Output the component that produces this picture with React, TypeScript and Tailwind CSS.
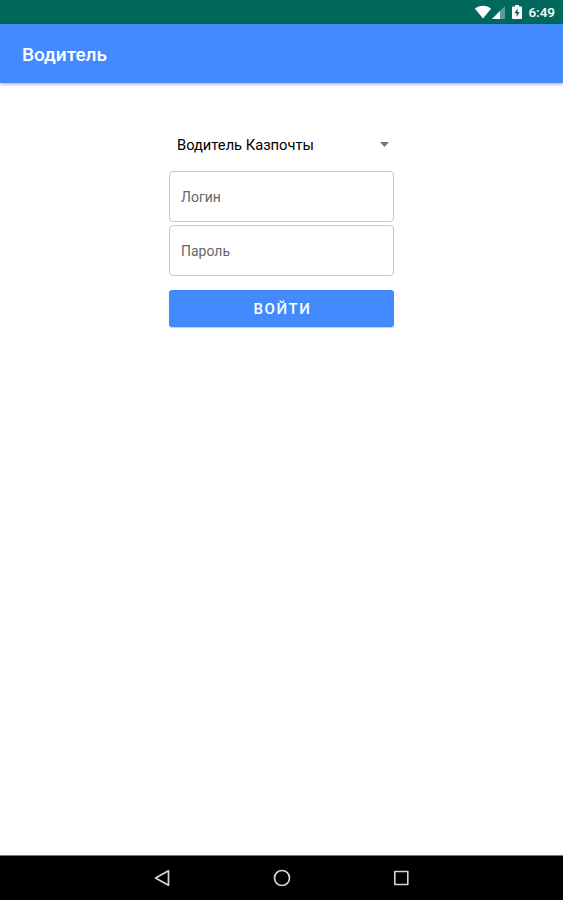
import React, { useState } from 'react';

const StatusBar: React.FC = () => (
  <div className="h-[24px] flex-shrink-0 bg-[#00695c] flex items-center justify-end pr-2 text-white">
    {/* Wifi */}
    <svg width="18" height="14" viewBox="0 0 18 14" fill="currentColor">
      <path d="M9 13.5 L0.8 3.6 C5.4 -0.3 12.6 -0.3 17.2 3.6 Z" />
    </svg>
    {/* Cell signal */}
    <svg width="13" height="13" viewBox="0 0 13 13" fill="currentColor">
      <path d="M0 13 L13 0 V13 Z" opacity="0.35" />
      <path d="M0 13 L8 5 V13 Z" />
    </svg>
    {/* Battery */}
    <svg width="10" height="14" viewBox="0 0 10 14" className="ml-[7px]">
      <path d="M3 0 H7 V1.4 H9 Q10 1.4 10 2.4 V13 Q10 14 9 14 H1 Q0 14 0 13 V2.4 Q0 1.4 1 1.4 H3 Z" fill="currentColor" />
      <path d="M5.6 3.4 L2.4 8.2 H4.5 V12 L7.6 7 H5.6 Z" fill="#00695c" />
    </svg>
    <span className="ml-[6px] pt-[2px] text-[13.5px] leading-none font-medium">6:49</span>
  </div>
);

interface FieldProps {
  label: string;
  type: string;
  value: string;
  onChange: (value: string) => void;
}

const Field: React.FC<FieldProps> = ({ label, type, value, onChange }) => (
  <label className="h-[51px] w-full flex items-center rounded-[4px] border border-[#c8c8c8] px-[11px] pt-[2px] text-[14px] text-[#666666]">
    {!value && <span className="flex-shrink-0">{label}</span>}
    <input
      type={type}
      value={value}
      onChange={(e) => onChange(e.target.value)}
      className="min-w-0 flex-grow bg-transparent text-black focus:outline-none"
    />
  </label>
);

const NavigationBar: React.FC = () => (
  <div className="h-[45px] flex-shrink-0 bg-black border-t border-[#777777] flex items-center justify-center gap-[102px] text-[#d6d6d6]">
    <svg width="18" height="18" viewBox="0 0 18 18" fill="none" stroke="currentColor" strokeWidth="1.7" strokeLinejoin="round">
      <path d="M15.5 1.8 V16.2 L2.5 9 Z" />
    </svg>
    <svg width="18" height="18" viewBox="0 0 18 18" fill="none" stroke="currentColor" strokeWidth="1.7">
      <circle cx="9" cy="9" r="7.5" />
    </svg>
    <svg width="18" height="18" viewBox="0 0 18 18" fill="none" stroke="currentColor" strokeWidth="1.6" strokeLinejoin="round">
      <rect x="1.8" y="2.5" width="13" height="13" />
    </svg>
  </div>
);

const App: React.FC = () => {
  const [login, setLogin] = useState('');
  const [password, setPassword] = useState('');

  return (
    <div className="h-screen flex flex-col bg-white font-['Roboto','Noto_Sans',sans-serif]">
      <StatusBar />

      <header className="h-[59px] flex-shrink-0 bg-[#448aff] pl-[22px] pt-[4px] flex items-center shadow-[0_1px_3px_rgba(0,0,0,0.35)]">
        <h1 className="text-[19px] font-medium text-white">Водитель</h1>
      </header>

      <main className="flex-grow w-[225px] mx-auto pt-[47px] flex flex-col">
        <button className="h-[28px] flex items-center justify-between pl-2 pr-[5px] text-[14.7px] text-black">
          <span className="pt-[2px]">Водитель Казпочты</span>
          <svg width="9" height="5" viewBox="0 0 9 5" fill="#757575">
            <path d="M0 0 H9 L4.5 5 Z" />
          </svg>
        </button>

        <form className="mt-[13px] flex flex-col" onSubmit={(e) => e.preventDefault()}>
          <Field label="Логин" type="text" value={login} onChange={setLogin} />
          <div className="h-[3px]" />
          <Field label="Пароль" type="password" value={password} onChange={setPassword} />
          <button
            type="submit"
            className="mt-[14px] h-[37px] rounded-[3px] bg-[#448aff] pl-[2px] pt-px text-[15px] font-medium tracking-[1.6px] text-white shadow-[0_1px_1px_rgba(68,138,255,0.4)]"
          >
            ВОЙТИ
          </button>
        </form>
      </main>

      <NavigationBar />
    </div>
  );
};

export default App;
